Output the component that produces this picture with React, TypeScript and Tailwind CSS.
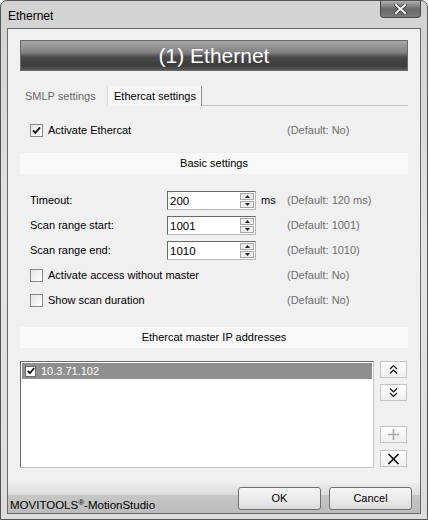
import React from 'react';

const font = "font-['Liberation_Sans',Arial,sans-serif]";

function Check({ checked }: { checked?: boolean }) {
  return (
    <span className="flex h-[13px] w-[13px] shrink-0 items-center justify-center border border-[#8a8a8a] bg-gradient-to-br from-[#e4e4e4] to-white">
      {checked && (
        <svg width="9" height="9" viewBox="0 0 9 9">
          <path d="M1 4.3 L3.4 6.8 L8 1.4" stroke="#1a1a1a" strokeWidth="1.9" fill="none" />
        </svg>
      )}
    </span>
  );
}

function Spin({ value }: { value: string }) {
  return (
    <div className="flex h-[19px] w-[89px] border border-[#b8b8b8] border-t-[#6a6a6a] border-l-[#6a6a6a] bg-white">
      <div className="flex-1 pl-[2px] text-[11.5px] leading-[18px] text-black">{value}</div>
      <div className="flex w-[15px] flex-col gap-[1px] py-[1px] pr-[1px]">
        <div className="flex flex-1 items-center justify-center border border-[#a8a8a8] bg-[#eeeeee]">
          <svg width="5" height="3" viewBox="0 0 5 3"><path d="M0 3 L2.5 0 L5 3 Z" fill="#222" /></svg>
        </div>
        <div className="flex flex-1 items-center justify-center border border-[#a8a8a8] bg-[#eeeeee]">
          <svg width="5" height="3" viewBox="0 0 5 3"><path d="M0 0 L2.5 3 L5 0 Z" fill="#222" /></svg>
        </div>
      </div>
    </div>
  );
}

function SpinRow({ label, value, unit, def }: { label: string; value: string; unit?: string; def: string }) {
  return (
    <div className="flex h-[25px] items-center">
      <span className="w-[137px] text-black">{label}</span>
      <Spin value={value} />
      <span className="w-[31px] pl-[5px] text-black">{unit}</span>
      <span className="text-[#6f6f6f]">{def}</span>
    </div>
  );
}

function CheckRow({ label, checked, def }: { label: string; checked?: boolean; def: string }) {
  return (
    <div className="flex h-[25px] items-center">
      <div className="flex w-[257px] items-center gap-[5px]">
        <Check checked={checked} />
        <span className="text-black">{label}</span>
      </div>
      <span className="text-[#6f6f6f]">{def}</span>
    </div>
  );
}

function Band({ children }: { children: React.ReactNode }) {
  return (
    <div className="mx-[12px] flex h-[21px] items-center justify-center bg-[#f9f9f9] text-black">
      {children}
    </div>
  );
}

function SideButton({ children }: { children: React.ReactNode }) {
  return (
    <div className="flex h-[17px] w-[27px] items-center justify-center border border-[#c4c4c4] bg-gradient-to-b from-white to-[#f0f0f0]">
      {children}
    </div>
  );
}

export default function App() {
  return (
    <div className={`${font} relative h-[520px] w-[428px] overflow-hidden rounded-t-[7px] border border-[#555] bg-gradient-to-b from-[#d2d2d2] via-[#e4e4e4] to-[#dcdcdc] text-[11px]`}>
      {/* title bar */}
      <div className="flex h-[27px] items-start justify-between">
        <span className="pl-[7px] pt-[6px] text-[12px] text-black">Ethernet</span>
        <div className="mr-[6px] flex h-[17px] w-[41px] items-center justify-center rounded-b-[4px] border border-t-0 border-[#4a4a4a] bg-gradient-to-b from-[#b0b0b0] via-[#6a6a6a] to-[#7a7a7a]">
          <svg width="13" height="10" viewBox="0 0 13 10">
            <path d="M2 1 L11 9 M11 1 L2 9" stroke="#333" strokeWidth="3.4" strokeLinecap="square" />
            <path d="M2 1 L11 9 M11 1 L2 9" stroke="#fff" strokeWidth="2" strokeLinecap="square" />
          </svg>
        </div>
      </div>

      {/* client area */}
      <div className="mx-[6px] flex h-[486px] flex-col border border-[#6a6a6a] bg-[#f0f0f0]">
        {/* banner */}
        <div className="mx-[12px] mt-[11px] flex h-[31px] items-center justify-center border border-[#6a6a6a] bg-[linear-gradient(to_bottom,#a8a8a8_0%,#808080_40%,#4a4a4a_55%,#3c3c3c_85%,#585858_100%)]">
          <span className="text-[21px] leading-none text-white">(1) Ethernet</span>
        </div>

        {/* tabs */}
        <div className="mx-[12px] mt-[15px] flex h-[20px] items-end">
          <div className="flex h-[20px] w-[87px] items-center pl-[5px] text-[#6a6a6a]">SMLP settings</div>
          <div className="flex h-[20px] w-[95px] items-center border-l border-r border-l-[#dadada] border-r-[#8f8f8f] bg-[#f6f6f6] pl-[6px] text-black">
            Ethercat settings
          </div>
          <div className="h-[20px] flex-1 border-b border-[#c4c4c4]" />
        </div>

        <div className="mt-[12px] pl-[22px]">
          <CheckRow label="Activate Ethercat" checked def="(Default: No)" />
        </div>

        <div className="mt-[10px]">
          <Band>Basic settings</Band>
        </div>

        <div className="mt-[14px] pl-[22px]">
          <SpinRow label="Timeout:" value="200" unit="ms" def="(Default: 120 ms)" />
          <SpinRow label="Scan range start:" value="1001" def="(Default: 1001)" />
          <SpinRow label="Scan range end:" value="1010" def="(Default: 1010)" />
          <CheckRow label="Activate access without master" def="(Default: No)" />
          <CheckRow label="Show scan duration" def="(Default: No)" />
        </div>

        <div className="mt-[14px]">
          <Band>Ethercat master IP addresses</Band>
        </div>

        {/* list + side buttons */}
        <div className="mx-[12px] mt-[13px] flex h-[107px] gap-[6px]">
          <div className="w-[354px] border border-[#c8c8c8] border-t-[#6a6a6a] border-l-[#6a6a6a] bg-white p-[1px]">
            <div className="flex h-[16px] items-center gap-[5px] bg-[#8f8f8f] pl-[3px]">
              <span className="flex h-[11px] w-[11px] items-center justify-center border border-[#6a6a6a] bg-white">
                <svg width="8" height="8" viewBox="0 0 8 8">
                  <path d="M0.8 3.8 L3 6.2 L7.2 1" stroke="#111" strokeWidth="1.8" fill="none" />
                </svg>
              </span>
              <span className="text-[11px] text-white">10.3.71.102</span>
            </div>
          </div>
          <div className="flex flex-col">
            <SideButton>
              <svg width="11" height="11" viewBox="0 0 11 11">
                <path d="M2 5 L5.5 1.5 L9 5 M2 9.5 L5.5 6 L9 9.5" stroke="#111" strokeWidth="1.2" fill="none" />
              </svg>
            </SideButton>
            <div className="mt-[6px]">
              <SideButton>
                <svg width="11" height="11" viewBox="0 0 11 11">
                  <path d="M2 1.5 L5.5 5 L9 1.5 M2 6 L5.5 9.5 L9 6" stroke="#111" strokeWidth="1.2" fill="none" />
                </svg>
              </SideButton>
            </div>
            <div className="mt-[25px]">
              <SideButton>
                <svg width="13" height="13" viewBox="0 0 13 13">
                  <path d="M6.5 1 V12 M1 6.5 H12" stroke="#a8a8a8" strokeWidth="1.6" />
                </svg>
              </SideButton>
            </div>
            <div className="mt-[7px]">
              <SideButton>
                <svg width="13" height="12" viewBox="0 0 13 12">
                  <path d="M1.5 1 L11.5 11 M11.5 1 L1.5 11" stroke="#111" strokeWidth="1.7" />
                </svg>
              </SideButton>
            </div>
          </div>
        </div>

        {/* bottom strip */}
        <div className="mt-[15px] flex h-[30px] items-start justify-between bg-[linear-gradient(to_bottom,#ececec_0%,#dedede_38%,#c6c6c6_42%,#bcbcbc_100%)]">
          <span className="pl-[2px] pt-[14px] text-[11.5px] text-black">
            MOVITOOLS<sup className="text-[8px]">®</sup>-MotionStudio
          </span>
          <div className="mr-[8px] mt-[4px] flex gap-[8px]">
            <div className="flex h-[23px] w-[83px] items-center justify-center rounded-[3px] border border-[#707070] bg-gradient-to-b from-[#f6f6f6] via-[#ebebeb] to-[#dcdcdc] text-black">
              OK
            </div>
            <div className="flex h-[23px] w-[83px] items-center justify-center rounded-[3px] border border-[#707070] bg-gradient-to-b from-[#f6f6f6] via-[#ebebeb] to-[#dcdcdc] text-black">
              Cancel
            </div>
          </div>
        </div>
      </div>
    </div>
  );
}
